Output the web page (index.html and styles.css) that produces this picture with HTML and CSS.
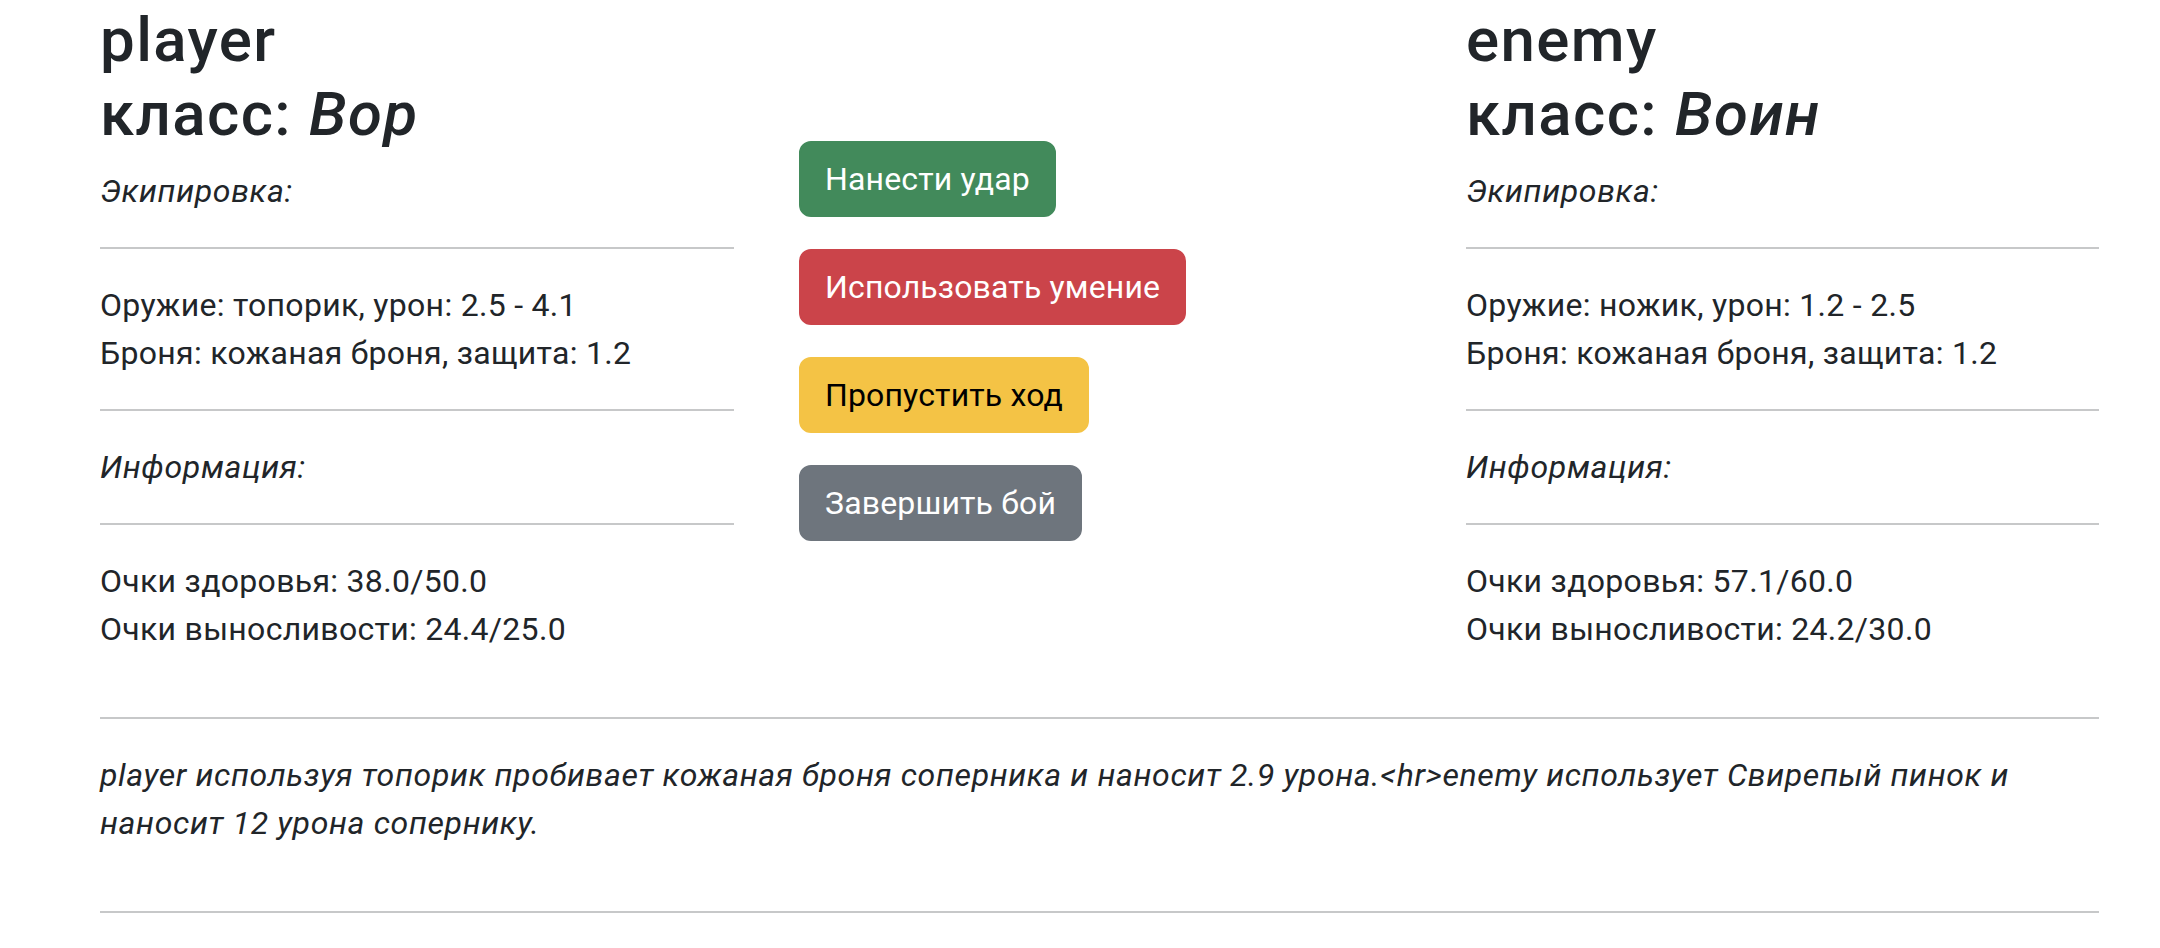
FILE: index.html
```html
<!DOCTYPE html>
<html lang="ru">
<head>
<meta charset="utf-8">
<title>Бой</title>
<link rel="stylesheet" href="styles.css">
</head>
<body>
<main class="container">
  <section class="battle">
    <div class="fighter">
      <h2 class="fighter-name">player<br>класс: <i>Вор</i></h2>
      <p><i>Экипировка:</i></p>
      <hr class="divider">
      <p>Оружие: топорик, урон: 2.5 - 4.1<br>Броня: кожаная броня, защита: 1.2</p>
      <hr class="divider">
      <p><i>Информация:</i></p>
      <hr class="divider">
      <p>Очки здоровья: 38.0/50.0<br>Очки выносливости: 24.4/25.0</p>
    </div>
    <div class="actions">
      <button class="btn btn-success">Нанести удар</button>
      <button class="btn btn-danger">Использовать умение</button>
      <button class="btn btn-warning">Пропустить ход</button>
      <button class="btn btn-secondary">Завершить бой</button>
    </div>
    <div class="fighter">
      <h2 class="fighter-name">enemy<br>класс: <i>Воин</i></h2>
      <p><i>Экипировка:</i></p>
      <hr class="divider">
      <p>Оружие: ножик, урон: 1.2 - 2.5<br>Броня: кожаная броня, защита: 1.2</p>
      <hr class="divider">
      <p><i>Информация:</i></p>
      <hr class="divider">
      <p>Очки здоровья: 57.1/60.0<br>Очки выносливости: 24.2/30.0</p>
    </div>
  </section>
  <hr class="divider">
  <section class="log">
    <p><i>player используя топорик пробивает кожаная броня соперника и наносит 2.9 урона.&lt;hr&gt;enemy использует Свирепый пинок и наносит 12 урона сопернику.</i></p>
  </section>
  <hr class="divider">
</main>
</body>
</html>
```
FILE: styles.css
```css
* { box-sizing: border-box; }

html, body {
  margin: 0;
  background: #ffffff;
}

body {
  font-family: Roboto, "Liberation Sans", sans-serif;
  font-size: 32px;
  line-height: 48px;
  letter-spacing: 0.3px;
  color: #212529;
}

i {
  letter-spacing: 0.65px;
}

.container {
  width: 1999px;
  margin-left: 100px;
  padding-top: 3px;
}

.battle {
  display: grid;
  grid-template-columns: 634px 1fr 633px;
  column-gap: 65px;
  align-items: start;
}

.fighter p {
  margin: 0 0 32px;
}

.fighter-name {
  margin: 0 0 16px;
  font-size: 61.8px;
  line-height: 74.2px;
  font-weight: 500;
  letter-spacing: 1.4px;
}

.fighter-name i {
  letter-spacing: 1.4px;
}

.divider {
  margin: 32px 0;
  border: 0;
  border-top: 2px solid #212529;
  opacity: 0.25;
}

.fighter .divider {
  margin: 0 0 32px;
}

.actions {
  display: flex;
  flex-direction: column;
  align-items: flex-start;
  gap: 32px;
  padding-top: 138px;
}

.btn {
  font-family: inherit;
  font-size: 32px;
  line-height: 48px;
  letter-spacing: 0.15px;
  padding: 12px 24px;
  border: 2px solid transparent;
  border-radius: 12px;
  cursor: pointer;
}

.btn-success { background: #428a5b; border-color: #428a5b; color: #ffffff; }
.btn-danger { background: #cb444a; border-color: #cb444a; color: #ffffff; }
.btn-warning { background: #f4c345; border-color: #f4c345; color: #000000; }
.btn-secondary { background: #6e757d; border-color: #6e757d; color: #ffffff; }

.log p {
  margin: 0;
  padding-bottom: 32px;
}
```
